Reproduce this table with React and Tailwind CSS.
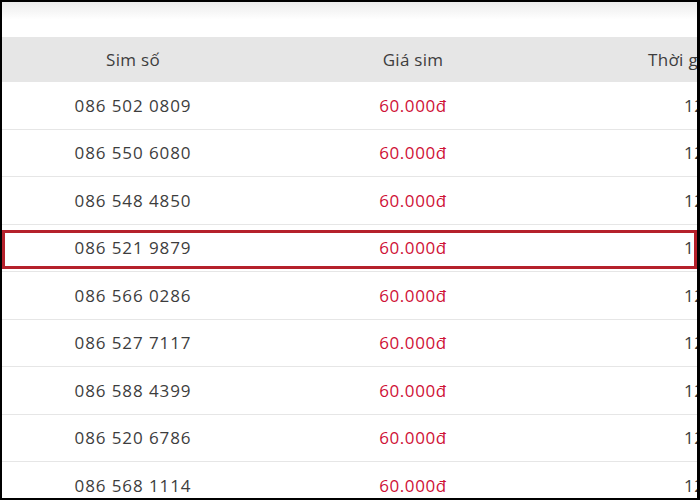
const rows = [
  "086 502 0809",
  "086 550 6080",
  "086 548 4850",
  "086 521 9879",
  "086 566 0286",
  "086 527 7117",
  "086 588 4399",
  "086 520 6786",
  "086 568 1114",
];

export default function App() {
  return (
    <div
      className="w-[700px] h-[500px] overflow-hidden bg-white border-black border-l-2 border-t-2 border-r-[3px] border-b-2 text-[#3d3d3d]"
      style={{ fontFamily: '"Open Sans", "Noto Sans", sans-serif' }}
    >
      <div className="h-[35px] bg-gradient-to-b from-[#ececec] via-white to-white" />
      <div className="w-[900px]">
        <div className="flex h-[45px] items-center bg-[#e6e6e6] text-[17px] tracking-[0.3px]">
          <div className="w-[262px] text-center">Sim số</div>
          <div className="w-[298px] text-center">Giá sim</div>
          <div className="flex-1 pl-[86px]">Thời gian</div>
        </div>
        {rows.map((num, i) => (
          <div
            key={num}
            className="relative flex h-[47.5px] items-center border-b border-[#e6e6e6] text-[17px]"
          >
            <div className="w-[262px] text-center tracking-[0.9px]">{num}</div>
            <div className="w-[298px] text-center tracking-[0.6px] text-[#cf1237]">60.000đ</div>
            <div className="flex-1 pl-[122px] tracking-[0.5px]">12 tháng</div>
            {i === 3 && (
              <div className="absolute left-0 w-[695px] top-[5px] bottom-[2px] border-[3px] border-[#b5212b]" />
            )}
          </div>
        ))}
      </div>
    </div>
  );
}
